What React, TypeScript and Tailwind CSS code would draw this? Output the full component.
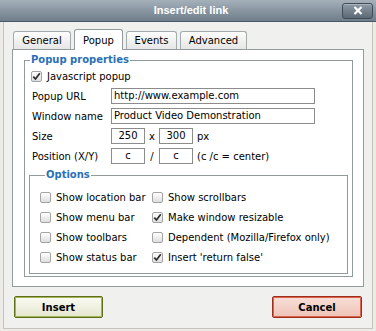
import React from "react";

function Box({ checked }: { checked?: boolean }) {
  return (
    <span className="flex h-[11px] w-[11px] shrink-0 items-center justify-center rounded-[2px] border border-[#a4a4a4] bg-gradient-to-b from-[#ffffff] to-[#dedede]">
      {checked && (
        <svg width="9" height="9" viewBox="0 0 9 9">
          <path d="M1.3 4.6 L3.5 7 L7.8 1.2" fill="none" stroke="#2c2c2c" strokeWidth="1.7" />
        </svg>
      )}
    </span>
  );
}

function Tab({ label, active, w }: { label: string; active?: boolean; w: string }) {
  if (active) {
    return (
      <div className={`${w} relative z-10 -mb-px flex h-[21px] items-start justify-center rounded-t-[3px] border border-b-0 border-[#919b9c] bg-white pt-[5px] leading-[12px]`}>
        {label}
      </div>
    );
  }
  return (
    <div className={`${w} flex h-[18px] items-start justify-center rounded-t-[3px] border border-b-0 border-[#a3abac] bg-gradient-to-b from-[#fdfdfd] to-[#e6e6e6] pt-[3px] leading-[12px]`}>
      {label}
    </div>
  );
}

function Field({ label, children }: { label: string; children: React.ReactNode }) {
  return (
    <div className="ml-[1px] flex h-[20px] items-center">
      <span className="w-[79px]">{label}</span>
      {children}
    </div>
  );
}

function Input({ value, w, center }: { value: string; w: string; center?: boolean }) {
  return (
    <div className={`${w} flex h-[16px] items-center border border-[#8c8c8c] bg-white px-[2px] leading-[12px] ${center ? "justify-center" : ""}`}>
      {value}
    </div>
  );
}

function Option({ label, checked }: { label: string; checked?: boolean }) {
  return (
    <div className="flex h-[20px] items-center gap-[5px]">
      <Box checked={checked} />
      <span>{label}</span>
    </div>
  );
}

export default function App() {
  return (
    <div className="flex h-[331px] w-[376px] flex-col bg-[#ecebe8] font-['DejaVu_Sans',sans-serif] text-[10px] text-black">
      {/* Title bar */}
      <div className="grid h-[22px] grid-cols-[1fr_auto_1fr] items-center border-b border-[#4b5863] bg-gradient-to-b from-[#a5b0ba] to-[#6f7e8b]">
        <span />
        <span className="pl-[6px] font-['Liberation_Sans',sans-serif] text-[11px] font-bold text-white">
          Insert/edit link
        </span>
        <div className="flex justify-end pr-[3px]">
          <div className="flex h-[16px] w-[31px] items-center justify-center rounded-[3px] border border-[#3f4b56] bg-gradient-to-b from-[#8e9ba6] to-[#5c6a76] shadow-[inset_0_1px_0_#a9b4bd]">
            <svg width="10" height="9" viewBox="0 0 10 9">
              <path d="M1.5 1 L8.5 8 M8.5 1 L1.5 8" stroke="#ffffff" strokeWidth="2.2" />
            </svg>
          </div>
        </div>
      </div>

      {/* Body */}
      <div className="mx-[3px] flex flex-col border-x border-b border-[#c9c2b8] bg-[#f0f0ee] px-[8px] pt-[7px] pb-[10px]">
        <div className="flex h-[20px] items-end gap-[3px] pl-[1px]">
          <Tab label="General" w="w-[58px]" />
          <Tab label="Popup" w="w-[49px]" active />
          <Tab label="Events" w="w-[51px]" />
          <Tab label="Advanced" w="w-[67px]" />
        </div>

        <div className="h-[238px] border border-[#919b9c] bg-white pt-[4px] pl-[11px]">
          <fieldset className="w-[329px] border border-[#919b9c] pb-[2px] pl-[6px]">
            <legend className="ml-[-1px] px-[1px] text-[10px] leading-[12px] font-bold text-[#2b6fb6]">
              Popup properties
            </legend>
            <div className="flex h-[20px] items-center gap-[5px]">
              <Box checked />
              <span>Javascript popup</span>
            </div>
            <Field label="Popup URL">
              <Input value="http://www.example.com" w="w-[204px]" />
            </Field>
            <Field label="Window name">
              <Input value="Product Video Demonstration" w="w-[204px]" />
            </Field>
            <Field label="Size">
              <Input value="250" w="w-[34px]" center />
              <span className="w-[14px] text-center">x</span>
              <Input value="300" w="w-[34px]" center />
              <span className="ml-[4px]">px</span>
            </Field>
            <Field label="Position (X/Y)">
              <Input value="c" w="w-[34px]" center />
              <span className="w-[14px] text-center">/</span>
              <Input value="c" w="w-[34px]" center />
              <span className="ml-[4px]">(c /c = center)</span>
            </Field>

            <fieldset className="mt-[3px] ml-[-2px] w-[319px] border border-[#919b9c] pt-[6px] pb-[6px] pl-[10px]">
              <legend className="ml-[5px] px-[1px] text-[10px] leading-[12px] font-bold text-[#2b6fb6]">
                Options
              </legend>
              <div className="grid grid-cols-[112px_1fr]">
                <Option label="Show location bar" />
                <Option label="Show scrollbars" />
                <Option label="Show menu bar" />
                <Option label="Make window resizable" checked />
                <Option label="Show toolbars" />
                <Option label="Dependent (Mozilla/Firefox only)" />
                <Option label="Show status bar" />
                <Option label="Insert 'return false'" checked />
              </div>
            </fieldset>
          </fieldset>
        </div>

        <div className="mt-[9px] flex justify-between px-[2px]">
          <button className="flex h-[22px] w-[89px] items-center justify-center rounded-[2px] border border-[#5f6f18] bg-gradient-to-b from-[#fbfbf3] to-[#e4e7cf] font-bold shadow-[inset_0_0_0_1px_#a3b35a]">
            Insert
          </button>
          <button className="flex h-[22px] w-[90px] items-center justify-center rounded-[2px] border border-[#9e2e1b] bg-gradient-to-b from-[#f8dfd8] to-[#eec2b6] font-bold shadow-[inset_0_0_0_1px_#d9634d]">
            Cancel
          </button>
        </div>
      </div>
    </div>
  );
}
